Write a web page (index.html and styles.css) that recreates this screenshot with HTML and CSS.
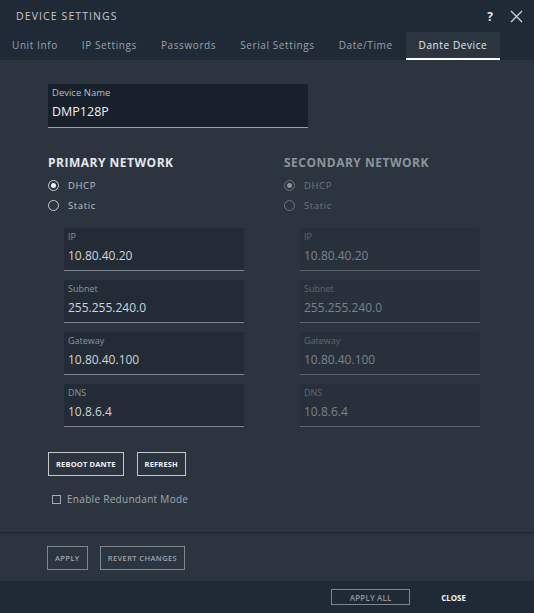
FILE: index.html
```html
<!DOCTYPE html>
<html>
<head>
<meta charset="utf-8">
<link rel="stylesheet" href="styles.css">
</head>
<body>
<div class="dialog">
  <div class="header">
    <div class="titlebar">
      <div class="title">DEVICE SETTINGS</div>
      <div class="actions">
        <span class="help">?</span>
        <svg class="close-x" width="13" height="13" viewBox="0 0 13 13"><path d="M1 1L12 12M12 1L1 12" stroke="#d0d4d8" stroke-width="1.3" fill="none"/></svg>
      </div>
    </div>
    <div class="tabs">
      <div class="tab">Unit Info</div>
      <div class="tab">IP Settings</div>
      <div class="tab">Passwords</div>
      <div class="tab">Serial Settings</div>
      <div class="tab">Date/Time</div>
      <div class="tab active">Dante Device</div>
    </div>
  </div>
  <div class="content">
    <div class="name-field">
      <div class="label">Device Name</div>
      <div class="value">DMP128P</div>
    </div>
    <div class="networks">
      <div class="network">
        <div class="net-title">PRIMARY NETWORK</div>
        <div class="radio"><span class="dot checked"></span>DHCP</div>
        <div class="radio"><span class="dot"></span>Static</div>
        <div class="fields">
          <div class="field"><div class="flabel">IP</div><div class="fvalue">10.80.40.20</div></div>
          <div class="field"><div class="flabel">Subnet</div><div class="fvalue">255.255.240.0</div></div>
          <div class="field"><div class="flabel">Gateway</div><div class="fvalue">10.80.40.100</div></div>
          <div class="field"><div class="flabel">DNS</div><div class="fvalue">10.8.6.4</div></div>
        </div>
      </div>
      <div class="network disabled">
        <div class="net-title">SECONDARY NETWORK</div>
        <div class="radio"><span class="dot checked"></span>DHCP</div>
        <div class="radio"><span class="dot"></span>Static</div>
        <div class="fields">
          <div class="field"><div class="flabel">IP</div><div class="fvalue">10.80.40.20</div></div>
          <div class="field"><div class="flabel">Subnet</div><div class="fvalue">255.255.240.0</div></div>
          <div class="field"><div class="flabel">Gateway</div><div class="fvalue">10.80.40.100</div></div>
          <div class="field"><div class="flabel">DNS</div><div class="fvalue">10.8.6.4</div></div>
        </div>
      </div>
    </div>
    <div class="btn-row">
      <div class="btn">REBOOT DANTE</div>
      <div class="btn">REFRESH</div>
    </div>
    <div class="check"><span class="box"></span>Enable Redundant Mode</div>
  </div>
  <div class="apply-row">
    <div class="btn dim">APPLY</div>
    <div class="btn dim">REVERT CHANGES</div>
  </div>
  <div class="footer">
    <div class="btn apply-all">APPLY ALL</div>
    <div class="close-btn">CLOSE</div>
  </div>
</div>
</body>
</html>
```
FILE: styles.css
```css
* { box-sizing: border-box; }
html, body { margin: 0; padding: 0; }
body {
  width: 534px;
  height: 613px;
  background: #2c353f;
  font-family: "Open Sans", "Noto Sans", sans-serif;
  overflow: hidden;
}
.dialog {
  width: 534px;
  height: 613px;
  display: flex;
  flex-direction: column;
  background: #2c353f;
}
.header { background: #1f2a36; }
.titlebar {
  height: 32px;
  display: flex;
  align-items: center;
  justify-content: space-between;
  padding: 0 11px 0 16px;
}
.title {
  color: #c4c9ce;
  font-size: 10.5px;
  letter-spacing: 1.1px;
}
.actions { display: flex; align-items: center; gap: 17px; }
.help { color: #e4e7ea; font-size: 12px; font-weight: 700; }
.close-x { display: block; }
.tabs { display: flex; height: 28px; }
.tab {
  padding: 0 12px 0 12px;
  color: #9aa2aa;
  font-size: 10px;
  letter-spacing: 0.6px;
  line-height: 26px;
  border-bottom: 2px solid transparent;
}
.tab.active {
  background: #2b3540;
  color: #e6e9ec;
  border-bottom-color: #ffffff;
  margin-left: 1px;
  padding: 0 13px;
}
.content {
  flex: 1;
  padding: 24px 0 0 48px;
  border-bottom: 1px solid #1e2730;
}
.name-field {
  width: 260px;
  height: 44px;
  background: #17202b;
  border-bottom: 1px solid #9aa1a8;
  border-radius: 2px 2px 0 0;
  padding: 3px 4px 0 4px;
}
.label { color: #b7bec5; font-size: 9.5px; line-height: 12px; }
.value { color: #f0f2f4; font-size: 12.5px; line-height: 16px; margin-top: 5px; }
.networks { display: flex; margin-top: 27px; gap: 0; }
.network { width: 236px; }
.net-title {
  color: #e4e7ea;
  font-size: 12px;
  font-weight: 700;
  letter-spacing: 0.5px;
  line-height: 16px;
  margin-bottom: 4px;
}
.radio {
  display: flex;
  align-items: center;
  height: 20px;
  color: #b9c0c6;
  font-size: 9.5px;
  letter-spacing: 0.6px;
}
.dot {
  width: 11px;
  height: 11px;
  border-radius: 50%;
  border: 1px solid #c8cdd2;
  margin-right: 9px;
  position: relative;
}
.dot.checked::after {
  content: "";
  position: absolute;
  left: 2px; top: 2px;
  width: 5px; height: 5px;
  border-radius: 50%;
  background: #f0f2f4;
}
.fields {
  margin: 13px 0 0 16px;
  display: flex;
  flex-direction: column;
  gap: 9px;
}
.field {
  width: 180px;
  height: 43px;
  background: #222b36;
  border-bottom: 1px solid #7e878f;
  border-radius: 2px 2px 0 0;
  padding: 3px 4px 0 4px;
}
.flabel { color: #8c949c; font-size: 9px; line-height: 12px; }
.fvalue { color: #d0d5da; font-size: 12px; line-height: 16px; margin-top: 5px; }
.disabled .net-title { color: #8d949b; }
.disabled .radio { color: #6e767e; }
.disabled .dot { border-color: #6e767e; }
.disabled .dot.checked::after { background: #8d949b; }
.disabled .field { background: #28313b; border-bottom-color: #5c646c; }
.disabled .flabel { color: #5f676f; }
.disabled .fvalue { color: #7a828a; }
.btn-row { display: flex; gap: 13px; margin-top: 25px; }
.btn {
  height: 24px;
  border: 1px solid #c3c8cd;
  color: #f0f2f4;
  font-size: 7.5px;
  font-weight: 700;
  letter-spacing: 0.15px;
  display: flex;
  align-items: center;
  padding: 0 7px;
}
.check {
  display: flex;
  align-items: center;
  margin: 16px 0 0 4px;
  color: #a2a9b0;
  font-size: 10px;
  letter-spacing: 0.3px;
}
.box {
  width: 9px; height: 9px;
  border: 1px solid #a2a9b0;
  margin-right: 6px;
}
.apply-row {
  height: 48px;
  display: flex;
  align-items: center;
  gap: 12px;
  padding-left: 47px;
  border-top: 1px solid #262f39;
}
.btn.dim { border-color: #7e868e; color: #9fa6ad; font-weight: 600; letter-spacing: 0.4px; }
.footer {
  height: 32px;
  background: #1f2a36;
  display: flex;
  align-items: center;
  justify-content: flex-end;
  padding-right: 68px;
}
.btn.apply-all {
  width: 79px;
  height: 16px;
  justify-content: center;
  border-color: #7e868e;
  color: #8e959c;
  font-weight: 600;
  font-size: 8px;
  margin-right: 31px;
}
.close-btn { color: #f0f2f4; font-size: 8px; font-weight: 700; }
```
